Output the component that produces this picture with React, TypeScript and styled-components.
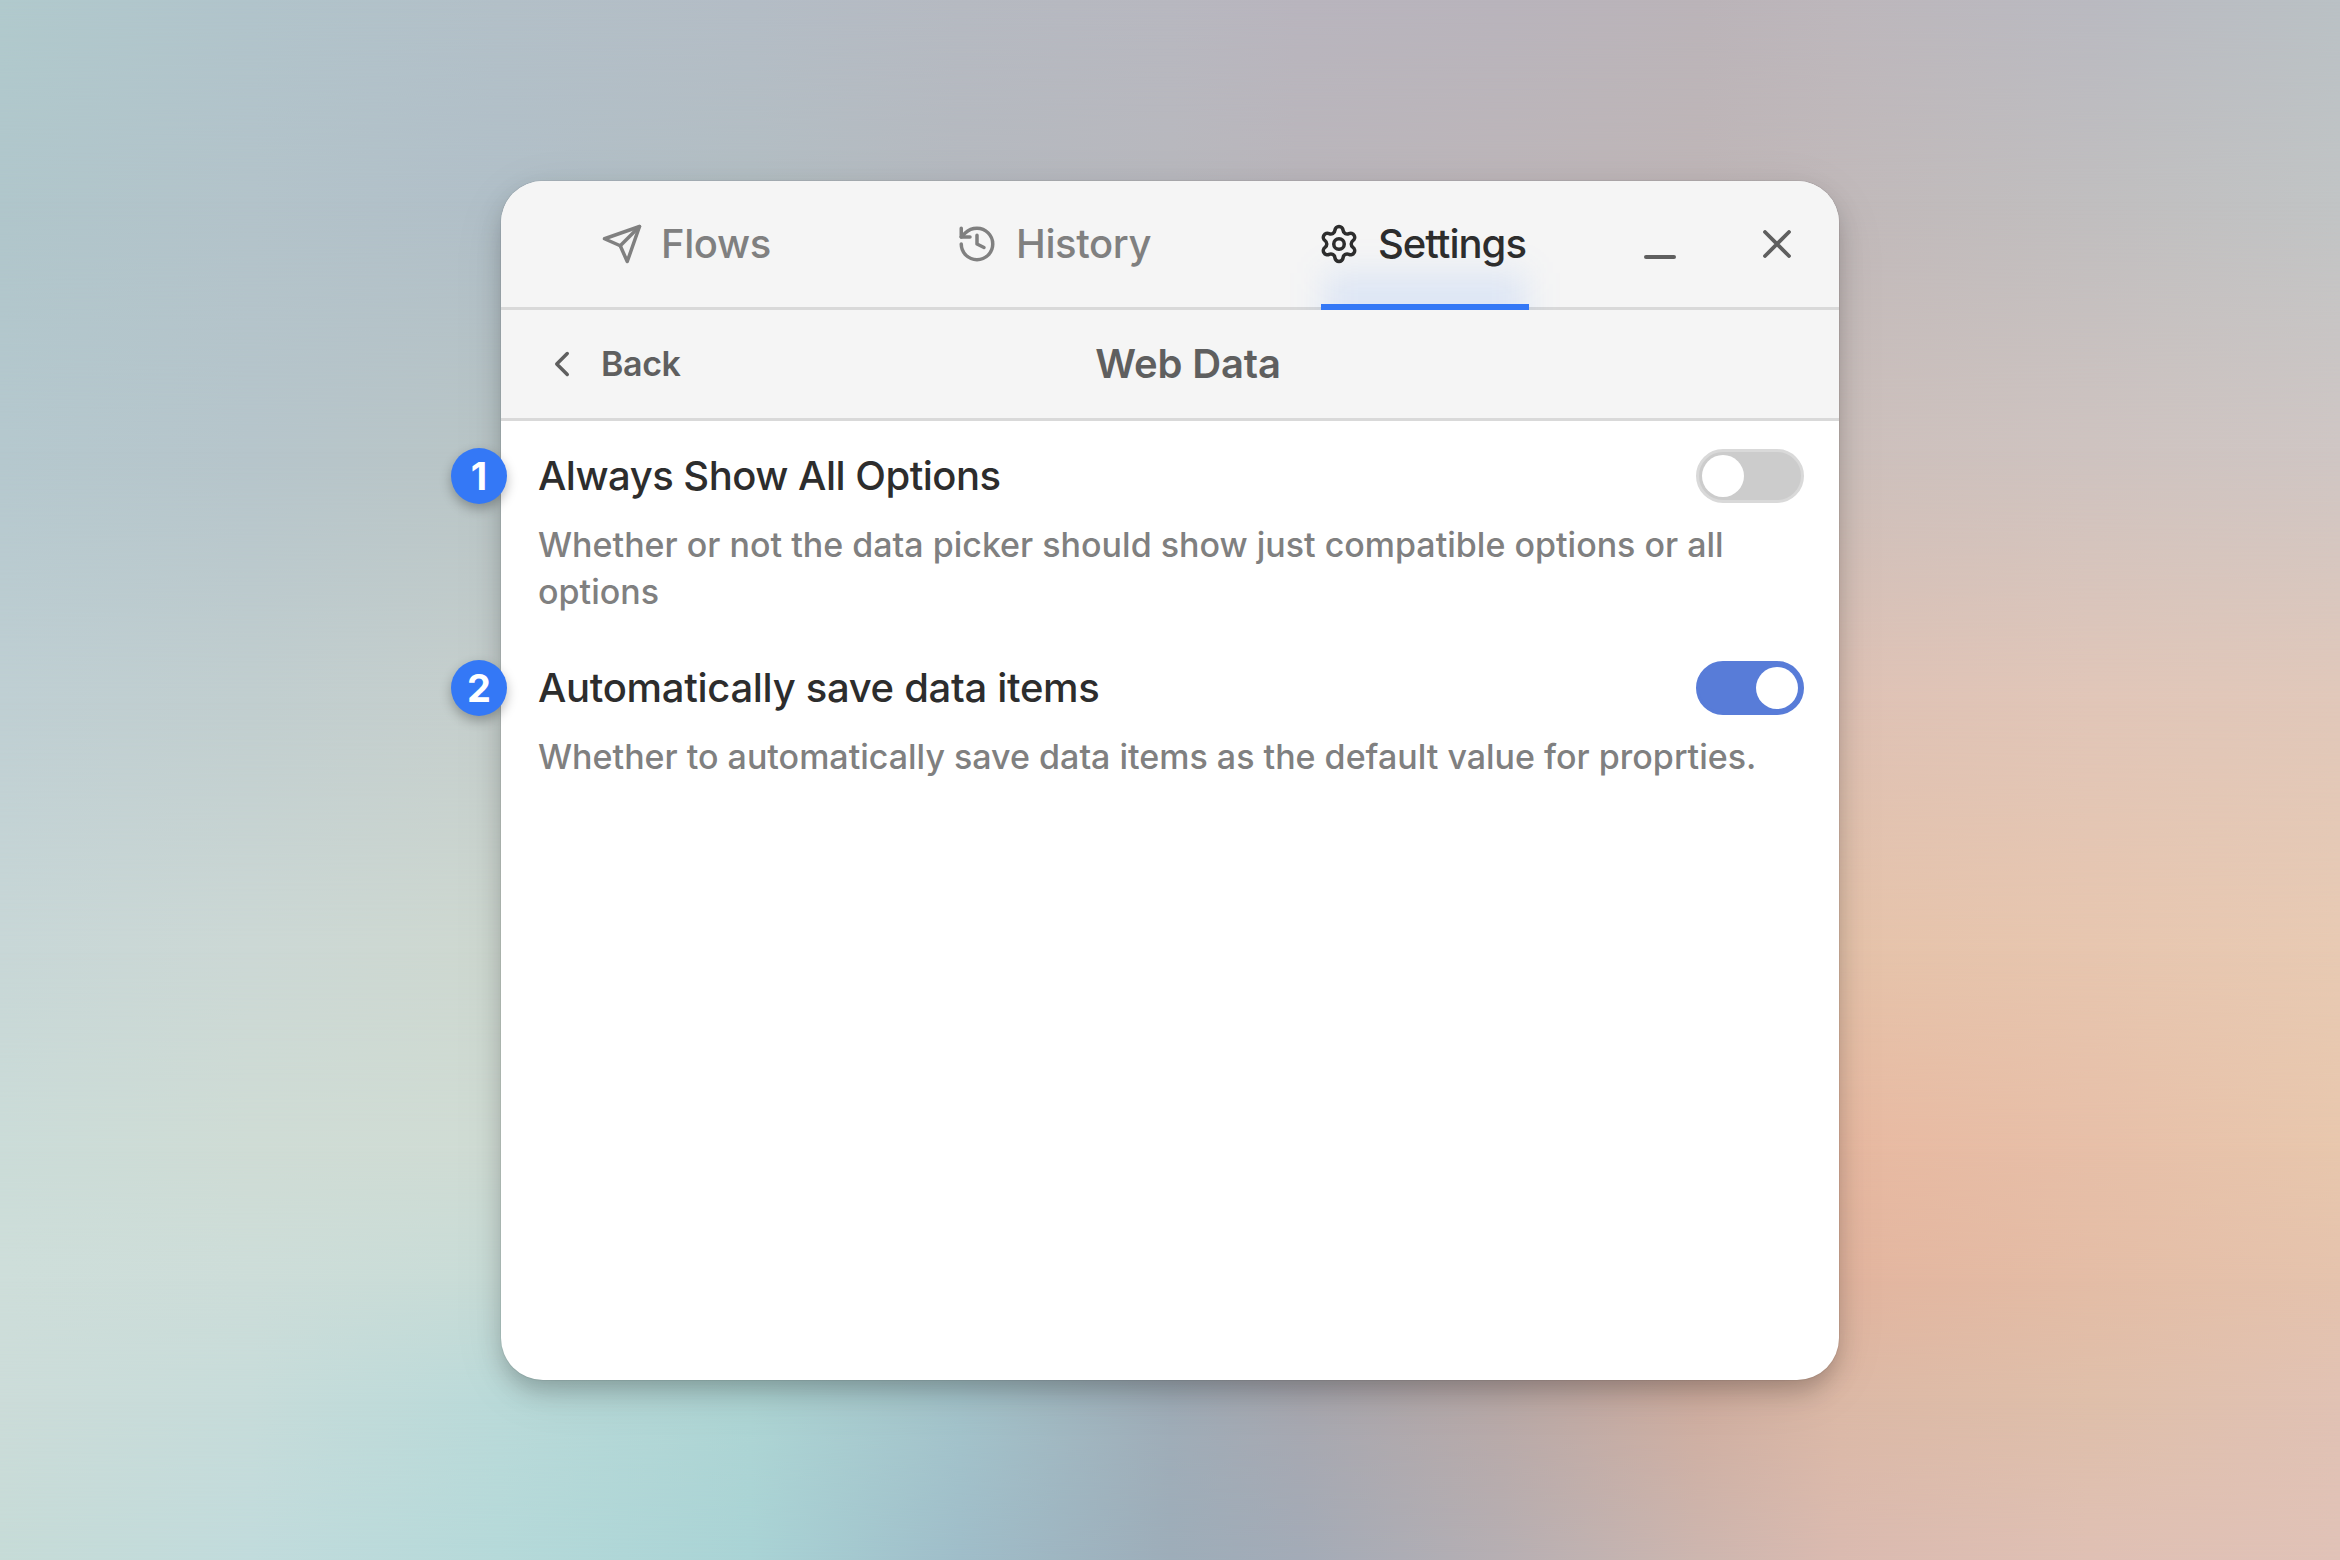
import React from "react";
import styled, { createGlobalStyle, css } from "styled-components";

const GlobalStyle = createGlobalStyle`
  *, *::before, *::after { box-sizing: border-box; }
  body {
    margin: 0;
    font-family: Inter, "Liberation Sans", sans-serif;
    -webkit-font-smoothing: antialiased;
  }
  button { border: 0; padding: 0; background: none; font: inherit; color: inherit; }
`;

/* ---------- wallpaper ---------- */

/* Colour mesh: each band is a horizontal gradient that fades in over the one above it. */
const stops = [0, 250, 500, 750, 960, 1170, 1300, 1500, 1700, 1840, 2090, 2340];

const bands: { y: number; colors: string[] }[] = [
  { y: 0, colors: ["#b1cacd", "#b1c4cb", "#b3c0c8", "#b4bdc6", "#b6bac2", "#b8b8c0", "#b9b5be", "#b9b4bc", "#bbb4b9", "#bdb7bc", "#babac1", "#bac1c5"] },
  { y: 200, colors: ["#b0c6cb", "#b3c3ca", "#b1bfc8", "#b3bec3", "#b5b9bf", "#b8b8bd", "#bab6bb", "#bdb6b9", "#bfb6b7", "#c1b9ba", "#c0bebf", "#c1c4c5"] },
  { y: 450, colors: ["#b5c8ce", "#b6c5cb", "#b9c5c6", "#bbc4c4", "#bdc0c0", "#c0bfbf", "#c2bdbd", "#c6bdbb", "#cabebb", "#cdc0bc", "#cec3c0", "#cfc6c4"] },
  { y: 700, colors: ["#bfcfd3", "#c1cecf", "#c6cfcd", "#c8cfcc", "#cccdc8", "#d0cac4", "#d3c8c0", "#d7c6bc", "#dcc4b7", "#dfc2b5", "#e1c6b8", "#e1c8ba"] },
  { y: 950, colors: ["#c8d7d7", "#ccd8d5", "#ced8d0", "#cfd4c8", "#d3d0c2", "#d7cdbd", "#dacab8", "#dec7b3", "#e3c4ad", "#e6c3aa", "#e7c6af", "#e8cab3"] },
  { y: 1150, colors: ["#cbdcd8", "#cfdcd5", "#d0dcd4", "#ccd6ce", "#cccec7", "#d0c6bd", "#d5c1b3", "#dcbbaa", "#e3b8a1", "#e8b9a1", "#e7bfa8", "#e8c7ad"] },
  { y: 1280, colors: ["#cededa", "#cdddd9", "#c8dcd7", "#bad7d3", "#b4c9c9", "#b3b9bd", "#b9b2b4", "#c9afa9", "#dab0a0", "#e3b59f", "#e4bda6", "#e5c3ad"] },
  { y: 1400, colors: ["#ccdcd9", "#c7dcda", "#badad9", "#aed5d4", "#a4c4cb", "#a0adb8", "#a8a8b0", "#b9a9a7", "#d0aea0", "#dcb9a6", "#dfbfaa", "#e1c2b4"] },
  { y: 1560, colors: ["#c6dbd7", "#c1dbdc", "#b5d9d9", "#a9d3d5", "#9fbdc9", "#9dadb9", "#a3abb7", "#b6afb3", "#cdb6af", "#dabab0", "#dfc0b4", "#e0c2b7"] },
];

const Stage = styled.main`
  position: relative;
  display: flex;
  justify-content: center;
  width: 2340px;
  height: 1560px;
  padding-top: 181px;
  overflow: hidden;
`;

const Band = styled.div<{ $colors: string[]; $from: number; $to: number }>`
  position: absolute;
  inset: 0;
  background: linear-gradient(to right, ${(p) => p.$colors.map((c, i) => `${c} ${stops[i]}px`).join(", ")});
  ${(p) =>
    p.$to > 0 &&
    css`
      mask-image: linear-gradient(to bottom, transparent ${p.$from}px, #000 ${p.$to}px);
    `}
`;

/* ---------- window ---------- */

const Window = styled.section`
  position: relative;
  display: flex;
  flex-direction: column;
  width: 1338px;
  height: 1199px;
  border-radius: 42px;
  background: #fff;
  box-shadow:
    0 0 0 1px rgba(0, 0, 0, 0.05),
    0 12px 26px -3px rgba(0, 0, 0, 0.26),
    0 12px 60px rgba(0, 0, 0, 0.06);
`;

const Header = styled.header`
  display: grid;
  grid-template-columns: 355px 362px 326px 119px auto;
  height: 129px;
  padding-left: 100px;
  border-bottom: 3px solid #d9d9d9;
  border-radius: 42px 42px 0 0;
  background: #f5f5f5;
  clip-path: inset(0);
`;

const Tab = styled.button<{ $active?: boolean }>`
  position: relative;
  justify-self: start;
  display: flex;
  align-items: center;
  gap: 18px;
  font-size: 40px;
  font-weight: 500;
  line-height: 50px;
  color: ${(p) => (p.$active ? "#2d2d2d" : "#808080")};
`;

const TabText = styled.span<{ $spacing: number }>`
  position: relative;
  letter-spacing: ${(p) => p.$spacing}px;
`;

const TabIcon = styled.svg`
  position: relative;
  flex: none;
  width: 42px;
  height: 42px;
`;

const Underline = styled.span`
  position: absolute;
  left: 3px;
  bottom: -3px;
  width: 208px;
  height: 6px;
  background: #3478f6;
`;

const Glow = styled.span`
  position: absolute;
  left: 6px;
  bottom: -32px;
  width: 202px;
  height: 66px;
  background: rgba(52, 120, 246, 0.12);
  filter: blur(17px);
`;

const WindowButton = styled.button`
  display: flex;
  align-items: center;
  justify-self: start;
  color: #5f5f5f;
`;

const MinimizeBar = styled.span`
  width: 32px;
  height: 4px;
  margin-top: 25px;
  border-radius: 2px;
  background: currentColor;
`;

const SubHeader = styled.div`
  display: grid;
  grid-template-columns: 236px 1fr 200px;
  align-items: center;
  height: 111px;
  border-bottom: 3px solid #d9d9d9;
  background: #f5f5f5;
  color: #5f5f5f;
  font-weight: 600;
`;

const BackButton = styled.button`
  display: flex;
  align-items: center;
  gap: 18px;
  padding-left: 40px;
  font-size: 34px;
  line-height: 42px;
  letter-spacing: -0.4px;
`;

const Title = styled.h1`
  margin: 0;
  text-align: center;
  font-size: 40px;
  font-weight: 600;
  line-height: 50px;
  letter-spacing: -0.15px;
`;

const Settings = styled.div`
  display: flex;
  flex-direction: column;
  gap: 46px;
  padding: 28px 35px 0 37px;
`;

const Setting = styled.div`
  position: relative;
  display: flex;
  flex-direction: column;
  gap: 18px;
`;

const SettingRow = styled.div`
  display: flex;
  align-items: center;
  justify-content: space-between;
  height: 54px;
`;

const SettingName = styled.span<{ $spacing: number }>`
  color: #2d2d2d;
  font-size: 40px;
  font-weight: 500;
  line-height: 54px;
  letter-spacing: ${(p) => p.$spacing}px;
`;

const SettingText = styled.p`
  margin: 0;
  color: #808080;
  font-size: 34px;
  font-weight: 500;
  line-height: 47px;
`;

const Toggle = styled.button<{ $on: boolean }>`
  display: flex;
  align-items: center;
  justify-content: ${(p) => (p.$on ? "flex-end" : "flex-start")};
  width: 108px;
  height: 54px;
  padding: 0 3px;
  border: 3px solid ${(p) => (p.$on ? "#587cd8" : "#d9d9d9")};
  border-radius: 27px;
  background: ${(p) => (p.$on ? "#587cd8" : "#cccccc")};
`;

const Knob = styled.span`
  width: 42px;
  height: 42px;
  border-radius: 50%;
  background: #fff;
`;

const Badge = styled.span`
  position: absolute;
  left: -87px;
  top: -1px;
  display: flex;
  align-items: center;
  justify-content: center;
  width: 56px;
  height: 56px;
  border-radius: 50%;
  background: #3478f6;
  box-shadow: 0 5px 12px rgba(0, 0, 0, 0.28);
  color: #fff;
  font-size: 38px;
  font-weight: 700;
  line-height: 56px;
`;

const stroke = {
  viewBox: "0 0 24 24",
  fill: "none",
  stroke: "currentColor",
  strokeWidth: 2,
  strokeLinecap: "round" as const,
  strokeLinejoin: "round" as const,
};

const items = [
  {
    name: "Always Show All Options",
    spacing: -0.5,
    text: "Whether or not the data picker should show just compatible options or all options",
    on: false,
  },
  {
    name: "Automatically save data items",
    spacing: -0.31,
    text: "Whether to automatically save data items as the default value for proprties.",
    on: true,
  },
];

export default function App() {
  return (
    <Stage>
      <GlobalStyle />
      {bands.map((band, i) => (
        <Band key={band.y} $colors={band.colors} $from={i ? bands[i - 1].y : 0} $to={band.y} />
      ))}
      <Window>
        <Header>
          <Tab>
            <TabIcon {...stroke}>
              <path d="m22 2-7 20-4-9-9-4Z" />
              <path d="M22 2 11 13" />
            </TabIcon>
            <TabText $spacing={-0.4}>Flows</TabText>
          </Tab>
          <Tab>
            <TabIcon {...stroke}>
              <path d="M3 12a9 9 0 1 0 9-9 9.75 9.75 0 0 0-6.74 2.74L3 8" />
              <path d="M3 3v5h5" />
              <path d="M12 7v5l4 2" />
            </TabIcon>
            <TabText $spacing={-0.4}>History</TabText>
          </Tab>
          <Tab $active>
            <Glow />
            <TabIcon {...stroke}>
              <path d="M9.671 4.136a2.34 2.34 0 0 1 4.659 0 2.34 2.34 0 0 0 3.319 1.915 2.34 2.34 0 0 1 2.33 4.033 2.34 2.34 0 0 0 0 3.831 2.34 2.34 0 0 1-2.33 4.033 2.34 2.34 0 0 0-3.319 1.915 2.34 2.34 0 0 1-4.659 0 2.34 2.34 0 0 0-3.32-1.915 2.34 2.34 0 0 1-2.33-4.033 2.34 2.34 0 0 0 0-3.831A2.34 2.34 0 0 1 6.35 6.051a2.34 2.34 0 0 0 3.319-1.915" />
              <circle cx="12" cy="12" r="3" />
            </TabIcon>
            <TabText $spacing={-1}>Settings</TabText>
            <Underline />
          </Tab>
          <WindowButton aria-label="Minimize">
            <MinimizeBar />
          </WindowButton>
          <WindowButton aria-label="Close">
            <svg width="28" height="28" viewBox="0 0 28 28" fill="none" stroke="currentColor" strokeWidth="3.8" strokeLinecap="round">
              <path d="M2 2 26 26M26 2 2 26" />
            </svg>
          </WindowButton>
        </Header>
        <SubHeader>
          <BackButton>
            <TabIcon {...stroke}>
              <path d="m15 18-6-6 6-6" />
            </TabIcon>
            Back
          </BackButton>
          <Title>Web Data</Title>
        </SubHeader>
        <Settings>
          {items.map((item, i) => (
            <Setting key={item.name}>
              <Badge>{i + 1}</Badge>
              <SettingRow>
                <SettingName $spacing={item.spacing}>{item.name}</SettingName>
                <Toggle $on={item.on} role="switch" aria-checked={item.on}>
                  <Knob />
                </Toggle>
              </SettingRow>
              <SettingText>{item.text}</SettingText>
            </Setting>
          ))}
        </Settings>
      </Window>
    </Stage>
  );
}
